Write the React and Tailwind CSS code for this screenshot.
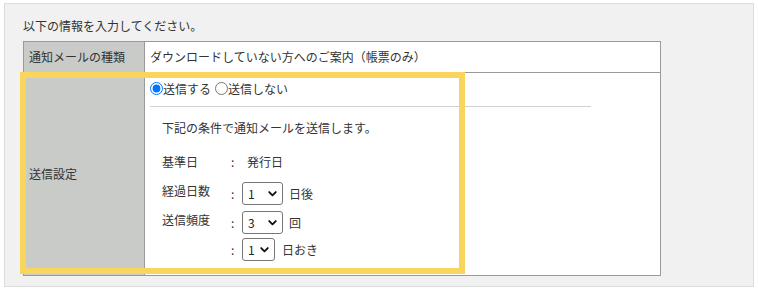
import { useState } from "react";

const FONT = "font-['Noto_Sans_CJK_JP','Noto_Sans',sans-serif]";

function Chevron() {
  return (
    <svg
      viewBox="0 0 10 7"
      className="pointer-events-none absolute right-[6px] top-1/2 h-[6px] w-[9px] -translate-y-1/2"
      aria-hidden
    >
      <path
        d="M1.2 1.3 L5 5.1 L8.8 1.3"
        fill="none"
        stroke="#111"
        strokeWidth="2.2"
        strokeLinecap="round"
        strokeLinejoin="round"
      />
    </svg>
  );
}

function NumSelect({ value, onChange, options, width }) {
  return (
    <div className={`relative h-[23px] ${width}`}>
      <select
        value={value}
        onChange={(e) => onChange(e.target.value)}
        className="h-full w-full appearance-none rounded-[3px] border border-[#767676] bg-white pl-[5px] text-[12px] leading-[21px] text-[#222] outline-none"
      >
        {options.map((o) => (
          <option key={o} value={o}>
            {o}
          </option>
        ))}
      </select>
      <Chevron />
    </div>
  );
}

export default function App() {
  const [send, setSend] = useState("yes");
  const [days, setDays] = useState("1");
  const [times, setTimes] = useState("3");
  const [interval, setInterval] = useState("1");
  const nums = ["1", "2", "3", "4", "5", "6", "7"];

  return (
    <div className={`h-[292px] w-[758px] bg-white pl-[4px] pt-[3px] text-[12px] text-[#333] ${FONT}`}>
      <div className="h-[284px] w-[750px] border border-[#dcdcdc] bg-[#f0f1f0] pl-[18px] pt-[13px]">
        <p className="leading-[18px]">以下の情報を入力してください。</p>

        <div className="relative mt-[6px] w-[638px] border border-[#9a9a9a] bg-white">
          {/* row 1 */}
          <div className="flex h-[30px]">
            <div className="flex w-[121px] shrink-0 items-center border-r border-[#9a9a9a] bg-[#c8cbc8] pl-[5px]">
              通知メールの種類
            </div>
            <div className="flex items-center pl-[5px]">
              ダウンロードしていない方へのご案内（帳票のみ）
            </div>
          </div>

          {/* row 2 */}
          <div className="flex h-[203px] border-t border-[#9a9a9a]">
            <div className="flex w-[121px] shrink-0 items-center border-r border-[#9a9a9a] bg-[#c8cbc8] pl-[5px]">
              送信設定
            </div>
            <div className="pl-[5px] pt-[7px]">
              <div className="flex h-[17px] items-center">
                <label className="flex items-center">
                  <input
                    type="radio"
                    name="send"
                    checked={send === "yes"}
                    onChange={() => setSend("yes")}
                    className="m-0 h-[13px] w-[13px]"
                  />
                  <span className="leading-[17px]">送信する</span>
                </label>
                <label className="ml-[4px] flex items-center">
                  <input
                    type="radio"
                    name="send"
                    checked={send === "no"}
                    onChange={() => setSend("no")}
                    className="m-0 h-[13px] w-[13px]"
                  />
                  <span className="leading-[17px]">送信しない</span>
                </label>
              </div>

              <div className="mt-[9px] h-px w-[441px] bg-[#d0d0d0]" />

              <div className="ml-[12px]">
                <p className="mt-[12px] leading-[18px]">
                  下記の条件で通知メールを送信します。
                </p>

                <div className="mt-[16px] flex leading-[18px]">
                  <span className="w-[69px]">基準日</span>
                  <span className="w-[11px]">:</span>
                  <span className="pl-[5px]">発行日</span>
                </div>

                <div className="mt-[11px] flex items-start">
                  <span className="w-[69px] leading-[18px]">経過日数</span>
                  <div className="flex items-center">
                    <span className="w-[11px]">:</span>
                    <NumSelect value={days} onChange={setDays} options={nums} width="w-[41px]" />
                    <span className="ml-[6px]">日後</span>
                  </div>
                </div>

                <div className="mt-[6px] flex items-start">
                  <span className="w-[69px] leading-[18px]">送信頻度</span>
                  <div className="flex items-center">
                    <span className="w-[11px]">:</span>
                    <NumSelect value={times} onChange={setTimes} options={nums} width="w-[41px]" />
                    <span className="ml-[6px]">回</span>
                  </div>
                </div>

                <div className="mt-[4px] flex items-start">
                  <span className="w-[69px]" />
                  <div className="flex items-center">
                    <span className="w-[11px]">:</span>
                    <NumSelect value={interval} onChange={setInterval} options={nums} width="w-[33px]" />
                    <span className="ml-[7px]">日おき</span>
                  </div>
                </div>
              </div>
            </div>
          </div>

          {/* highlight frame */}
          <div className="pointer-events-none absolute left-[-4px] top-[30px] h-[202px] w-[445px] border-[6px] border-[#f9d55b]" />
        </div>
      </div>
    </div>
  );
}
